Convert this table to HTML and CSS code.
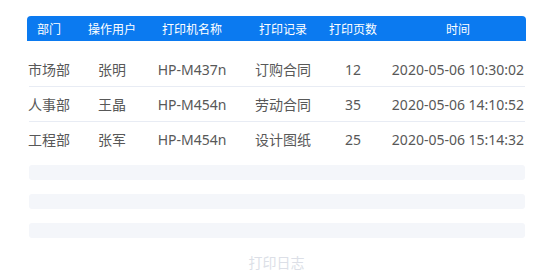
FILE: index.html
```html
<!DOCTYPE html>
<html lang="zh-CN">
<head>
<meta charset="utf-8">
<title>打印日志</title>
<link rel="stylesheet" href="styles.css">
</head>
<body>
<div class="panel">
  <div class="thead grid">
    <div class="cell">部门</div>
    <div class="cell">操作用户</div>
    <div class="cell">打印机名称</div>
    <div class="cell">打印记录</div>
    <div class="cell">打印页数</div>
    <div class="cell c6">时间</div>
  </div>
  <div class="tbody">
    <div class="row grid">
      <div class="cell">市场部</div>
      <div class="cell">张明</div>
      <div class="cell">HP-M437n</div>
      <div class="cell">订购合同</div>
      <div class="cell">12</div>
      <div class="cell c6">2020-05-06 10:30:02</div>
    </div>
    <div class="row grid">
      <div class="cell">人事部</div>
      <div class="cell">王晶</div>
      <div class="cell">HP-M454n</div>
      <div class="cell">劳动合同</div>
      <div class="cell">35</div>
      <div class="cell c6">2020-05-06 14:10:52</div>
    </div>
    <div class="row grid last">
      <div class="cell">工程部</div>
      <div class="cell">张军</div>
      <div class="cell">HP-M454n</div>
      <div class="cell">设计图纸</div>
      <div class="cell">25</div>
      <div class="cell c6">2020-05-06 15:14:32</div>
    </div>
  </div>
  <div class="skeleton">
    <div class="bar"></div>
    <div class="bar"></div>
    <div class="bar"></div>
  </div>
  <div class="caption">打印日志</div>
</div>
</body>
</html>
```

FILE: styles.css
```css
html, body {
  margin: 0;
  padding: 0;
  background: #ffffff;
}

body {
  font-family: "Noto Sans", "Noto Sans CJK SC", sans-serif;
}

.panel {
  width: 499px;
  margin-left: 27px;
  padding-top: 16px;
}

.grid {
  display: grid;
  grid-template-columns: 44px 82px 78px 104px 36px 155px;
}

.cell {
  display: flex;
  justify-content: center;
  align-items: center;
  white-space: nowrap;
}

.c6 {
  padding-left: 19px;
}

.thead {
  height: 25px;
  background: #0b7af0;
  border-radius: 4px 4px 0 0;
  color: #ffffff;
  font-size: 12px;
}

.tbody {
  margin-top: 11px;
}

.row {
  height: 34px;
  padding-bottom: 1px;
  font-size: 14px;
  color: #585858;
  background: linear-gradient(#e8ecf4, #e8ecf4) no-repeat 2px 100% / 496px 1px;
}

.row.last {
  background: none;
}

.skeleton {
  margin: 8px 1px 0 2px;
  display: flex;
  flex-direction: column;
  gap: 14px;
}

.bar {
  height: 15px;
  border-radius: 3px;
  background: #f4f6fa;
}

.caption {
  margin-top: 15px;
  text-align: center;
  font-size: 14px;
  line-height: 20px;
  color: #dcdfe7;
}
```
